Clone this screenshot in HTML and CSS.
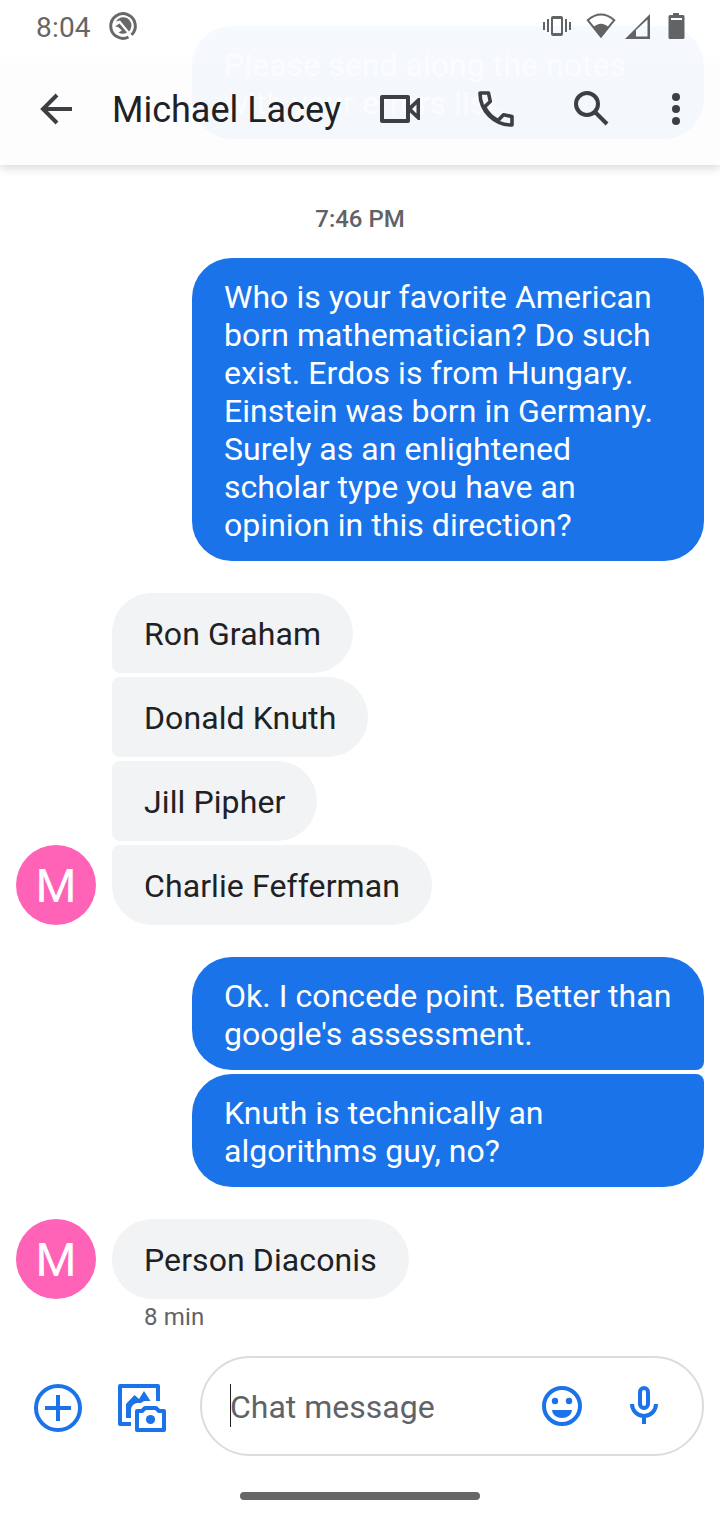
FILE: index.html
```html
<!DOCTYPE html>
<html lang="en">
<head>
<meta charset="utf-8">
<title>Michael Lacey</title>
<link rel="stylesheet" href="styles.css">
</head>
<body>
<div class="screen">
  <header class="top">
    <div class="ghost">Please send along the notes<br>with your errors list.</div>
    <div class="status">
      <span class="clock">8:04</span>
      <svg class="app-mark" width="28" height="28" viewBox="0 0 28 28">
        <path d="M22.500 22.900A12.300 12.300 0 1 0 19.500 25" fill="none" stroke="#686868" stroke-width="3"/>
        <path d="M7 9.500A8.200 8.200 0 0 1 21.500 17.500L20 19.500L11 8.500z" fill="#686868"/>
        <path d="M6 14.500L10.500 11.500L18 20.500Q14 23 9.500 20.500L13 18.500L9 15z" fill="#686868"/>
      </svg>
      <svg class="signals" width="142" height="28" viewBox="0 0 142 28">
        <g fill="#616365">
          <path d="M0 10h2v8H0zM4 7h2v13H4zM22 7h2v13h-2zM26 10h2v8h-2z"/>
          <path fill-rule="evenodd" d="M10 4h8a2 2 0 0 1 2 2v16a2 2 0 0 1-2 2h-8a2 2 0 0 1-2-2V6a2 2 0 0 1 2-2zm0 3v14h8V7z"/>
          <path d="M58 26L50 15.500Q58 8 66 15.500z"/>
        </g>
        <path d="M58 24.500L44.700 8.200Q58-3.200 71.300 8.200z" fill="none" stroke="#616365" stroke-width="2"/>
        <g fill="#616365">
          <path fill-rule="evenodd" d="M82 27l25-25v25zM93 18v6.500h11.500V7.500z"/>
          <path fill-rule="evenodd" d="M130 1h6v2h4a1.500 1.500 0 0 1 1.500 1.500v21A1.500 1.500 0 0 1 140 27h-13a1.500 1.500 0 0 1-1.500-1.500v-21A1.500 1.500 0 0 1 127 3h3zM128 6v2h11V6z"/>
        </g>
      </svg>
    </div>
    <div class="appbar">
      <svg class="back" width="32" height="32" viewBox="0 0 32 32"><path d="M32 16H3M17 2L3 16l14 14" fill="none" stroke="#3c4043" stroke-width="4"/></svg>
      <h1 class="title">Michael Lacey</h1>
      <svg class="video" width="40" height="28" viewBox="0 0 40 28"><path d="M2 2h26v24H2z" fill="none" stroke="#3c4043" stroke-width="4" stroke-linejoin="round"/><path fill="#3c4043" fill-rule="evenodd" d="M29 11.500l9-8.500h2v22h-2l-9-8.500zM32 14l4.500 4.500v-9z"/></svg>
      <svg class="phone" width="36" height="36" viewBox="0 0 36 36"><g fill="none" stroke="#3c4043" stroke-width="3.600" stroke-linejoin="round"><path d="M2 2h8.500l1.800 8.500-5.800 5.300Q11 25 20 29.500l5.500-5.800L34 25.500V34C16 34 2 20 2 2z"/></g></svg>
      <svg class="search" width="36" height="36" viewBox="0 0 36 36"><g fill="none" stroke="#3c4043" stroke-width="4"><circle cx="13" cy="13" r="11"/><path d="M21.500 21.500L33 33"/></g></svg>
      <svg class="more" width="8" height="32" viewBox="0 0 8 32"><g fill="#3c4043"><circle cx="4" cy="4" r="4"/><circle cx="4" cy="16" r="4"/><circle cx="4" cy="28" r="4"/></g></svg>
    </div>
  </header>

  <main class="thread">
    <div class="stamp">7:46 PM</div>
    <div class="group sent">
      <div class="bubble">Who is your favorite American<br>born mathematician? Do such<br>exist. Erdos is from Hungary.<br>Einstein was born in Germany.<br>Surely as an enlightened<br>scholar type you have an<br>opinion in this direction?</div>
    </div>
    <div class="row">
      <div class="avatar">M</div>
      <div class="group received">
        <div class="bubble">Ron Graham</div>
        <div class="bubble">Donald Knuth</div>
        <div class="bubble">Jill Pipher</div>
        <div class="bubble">Charlie Fefferman</div>
      </div>
    </div>
    <div class="group sent">
      <div class="bubble">Ok. I concede point. Better than<br>google's assessment.</div>
      <div class="bubble">Knuth is technically an<br>algorithms guy, no?</div>
    </div>
    <div class="row">
      <div class="avatar">M</div>
      <div class="group received">
        <div class="bubble">Person Diaconis</div>
      </div>
    </div>
    <div class="age">8 min</div>
  </main>

  <footer class="composer">
    <svg class="add" width="48" height="48" viewBox="0 0 48 48"><g fill="none" stroke="#1a73e8" stroke-width="4"><circle cx="24" cy="24" r="22"/><path d="M24 11v26M11 24h26"/></g></svg>
    <svg class="gallery" width="48" height="48" viewBox="0 0 48 48">
      <path d="M13 40H2V2h38v15" fill="none" stroke="#1a73e8" stroke-width="4" stroke-linejoin="round"/>
      <path d="M8 34V20l8.500-9 4.500 4 5-8 6.500 10H26l-3 2h-4q-5 1-6 6v9z" fill="#1a73e8"/>
      <path d="M19 27h5l3-3h11l3 3h5v19H19z" fill="none" stroke="#1a73e8" stroke-width="4" stroke-linejoin="round"/>
      <circle cx="32.500" cy="35.500" r="4.600" fill="#1a73e8"/>
    </svg>
    <div class="field">
      <span class="caret"></span>
      <span class="hint">Chat message</span>
      <svg class="emoji" width="40" height="40" viewBox="0 0 40 40"><circle cx="20" cy="20" r="18" fill="none" stroke="#1a73e8" stroke-width="4"/><g fill="#1a73e8"><circle cx="13" cy="15" r="3.200"/><circle cx="27" cy="15" r="3.200"/><path d="M10 24h20a10 8 0 0 1-20 0z"/></g></svg>
      <svg class="mic" width="28" height="38" viewBox="0 0 28 38"><g fill="none" stroke="#1a73e8" stroke-width="4"><rect x="10" y="2" width="8" height="20" rx="4"/><path d="M2 18a12 12 0 0 0 24 0M14 30v8"/></g></svg>
    </div>
  </footer>
  <div class="navbar"><span class="handle"></span></div>
</div>
</body>
</html>
```
FILE: styles.css
```css
* { box-sizing: border-box; }
body { margin: 0; background: #fff; font-family: Roboto, sans-serif; }
svg { display: block; flex: none; overflow: visible; }
.screen { width: 720px; height: 1520px; display: flex; flex-direction: column; overflow: hidden; }

.top { position: relative; height: 165px; flex: none; background: linear-gradient(#fff 0, #fff 50px, #fdfdfd 70px, #fdfdfd 100%); box-shadow: 0 2px 10px rgba(0,0,0,.18); }
.ghost { position: absolute; left: 192px; top: 26px; width: 512px; height: 113px; padding: 20px 32px; border-radius: 40px; background: linear-gradient(#f6f9fe, #f4f8fc 60%); color: #fbfcfd; font-size: 32px; line-height: 38px; letter-spacing: .05px; white-space: nowrap; }
.status { position: relative; display: flex; align-items: center; height: 52px; padding: 0 35px 0 36px; }
.clock { font-size: 28px; line-height: 32px; color: #666; letter-spacing: .2px; width: 73px; padding-top: 3px; }
.signals { margin-left: auto; }
.appbar { position: relative; display: flex; align-items: center; height: 114px; padding: 0 40px; }
.title { margin: 0 0 0 40px; padding-top: 1px; width: 268px; font-size: 36px; font-weight: 400; line-height: 44px; color: #202124; white-space: nowrap; }
.phone { margin-left: 58px; }
.search { margin-left: 60px; }
.more { margin-left: 62px; }

.thread { flex: none; padding: 39px 16px 0; }
.stamp { height: 30px; margin-bottom: 24px; text-align: center; font-size: 24px; line-height: 30px; font-weight: 500; color: #5f6368; }
.group { display: flex; flex-direction: column; gap: 4px; }
.sent { align-items: flex-end; }
.received { align-items: flex-start; }
.bubble { border-radius: 40px; padding: 20px 32px 17px; font-size: 32px; line-height: 38px; letter-spacing: .05px; white-space: nowrap; }
.sent .bubble { width: 512px; background: #1a73e8; color: #fff; }
.received .bubble { height: 80px; padding-top: 22px; letter-spacing: .1px; background: #f1f3f4; color: #202124; }
.sent .bubble:not(:last-child) { border-bottom-right-radius: 8px; }
.sent .bubble:not(:first-child) { border-top-right-radius: 8px; }
.received .bubble:not(:last-child) { border-bottom-left-radius: 8px; }
.received .bubble:not(:first-child) { border-top-left-radius: 8px; }
.row { display: flex; align-items: flex-end; gap: 16px; margin: 32px 0; }
.avatar { width: 80px; height: 80px; border-radius: 50%; background: #ff63b8; color: #fff; font-size: 47px; line-height: 81px; text-align: center; }
.age { margin: -28px 0 0 128px; font-size: 24px; line-height: 28px; letter-spacing: .2px; color: #5f6368; }

.composer { display: flex; align-items: center; height: 100px; margin-top: 25px; padding: 0 16px 0 34px; }
.gallery { margin-left: 36px; }
.add, .gallery { margin-top: 4px; }
.field { display: flex; align-items: center; width: 504px; height: 100px; margin-left: 34px; padding: 0 44px 0 28px; border: 2px solid #dadce0; border-radius: 50px; }
.caret { width: 1px; height: 43px; margin-top: -2px; background: #202124; }
.hint { margin-left: -1px; color: #5f6368; font-size: 32px; line-height: 38px; padding-top: 2px; }
.emoji { margin-left: auto; }
.mic { margin: -2px 0 0 48px; }
.navbar { display: flex; justify-content: center; padding-top: 36px; }
.handle { width: 240px; height: 8px; border-radius: 4px; background: #666; }
```
